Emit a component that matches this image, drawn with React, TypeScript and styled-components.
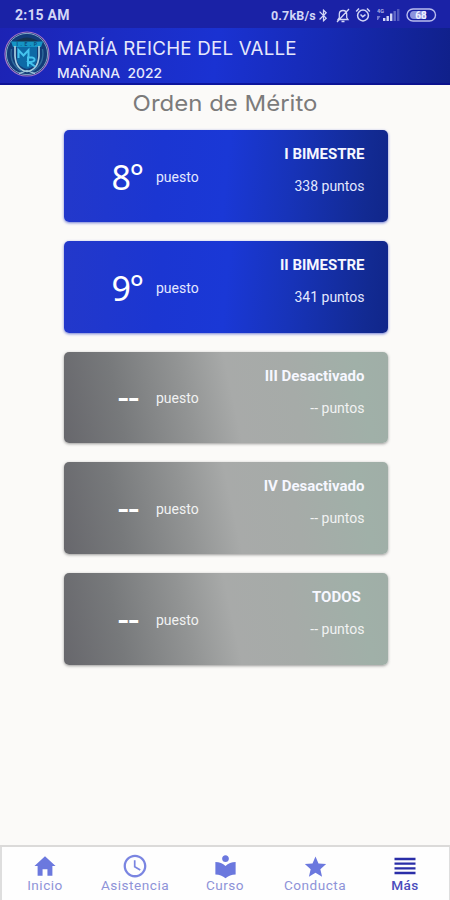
import React from "react";
import styled, { createGlobalStyle } from "styled-components";
import { IoMdHome, IoMdTime, IoMdStar } from "react-icons/io";
import { MdLocalLibrary, MdReorder, MdBluetooth } from "react-icons/md";

const GlobalStyle = createGlobalStyle`
  * { box-sizing: border-box; }
  body { margin: 0; background: #fbfaf8; font-family: Roboto, "Noto Sans", sans-serif; }
`;

const Screen = styled.div`
  width: 450px;
  height: 900px;
  display: flex;
  flex-direction: column;
  background: #fbfaf8;
  overflow: hidden;
`;

const StatusBar = styled.div`
  height: 28px;
  flex: none;
  display: flex;
  align-items: center;
  justify-content: space-between;
  padding: 2px 13px 0 15px;
  background: #1a22a6;
  color: #d2d6f6;
`;

const Clock = styled.span`
  font-size: 14px;
  font-weight: 700;
  letter-spacing: 0.2px;
`;

const StatusItems = styled.div`
  display: flex;
  align-items: center;
  svg { display: block; }
`;

const Speed = styled.span`
  font-size: 12.5px;
  font-weight: 700;
  letter-spacing: 0.2px;
`;

const Indicators = styled.div`
  display: flex;
  align-items: center;
  gap: 5px;
`;

const Header = styled.header`
  height: 57px;
  flex: none;
  display: flex;
  align-items: flex-start;
  padding: 2px 0 0 4px;
  background: linear-gradient(96deg, #1c23b4 0%, #1b2cc4 25%, #1a32d2 48%, #162ab4 72%, #10208a 100%);
  border-bottom: 2px solid rgba(10, 14, 140, 0.75);
`;

const HeaderText = styled.div`
  display: flex;
  flex-direction: column;
  align-items: flex-start;
  padding: 7px 0 0 7px;
  font-family: Inter, sans-serif;
  color: #e6e8fb;
  white-space: pre;
`;

const School = styled.h1`
  margin: 0;
  font-size: 18px;
  line-height: 24px;
  font-weight: 400;
  letter-spacing: 0.2px;
  transform: scaleX(1.04);
  transform-origin: left;
`;

const Shift = styled.span`
  margin-top: 2px;
  font-size: 13px;
  line-height: 20px;
  font-weight: 500;
  transform: scaleX(1.065);
  transform-origin: left;
`;

const Title = styled.h2`
  height: 45px;
  flex: none;
  margin: 0;
  padding-top: 4px;
  text-align: center;
  font-family: Inter, sans-serif;
  font-weight: 400;
  font-size: 22px;
  line-height: 28px;
  color: #7b7b7b;
  transform: scaleX(1.09);
`;

const CardList = styled.main`
  flex: 1;
  display: flex;
  flex-direction: column;
  gap: 19px;
  padding: 0 62.5px 0 63.5px;
`;

const Card = styled.section<{ $active: boolean }>`
  height: 91.8px;
  display: flex;
  justify-content: space-between;
  padding-right: 23px;
  border-radius: 5px;
  color: ${(p) => (p.$active ? "#e3e8ff" : "#f1f2f2")};
  background: ${(p) =>
    p.$active
      ? "linear-gradient(95deg, #2338ca 0%, #1b36d2 30%, #1a38d6 50%, #1733b8 70%, #122a92 93%, #10268a 100%)"
      : "linear-gradient(78deg, #67676c 0%, #77797b 18%, #929494 38%, #a8aaa9 52%, #a6aba8 70%, #a0b0a8 90%, #a0aea7 100%)"};
  box-shadow: 0 1px 3px ${(p) => (p.$active ? "rgba(20, 40, 190, 0.6)" : "rgba(60, 60, 60, 0.5)")};
`;

const Rank = styled.div`
  display: flex;
  align-items: center;
  padding-top: 2px;
`;

const Place = styled.span<{ $active: boolean }>`
  width: 92.5px;
  padding-left: ${(p) => (p.$active ? "48px" : "54px")};
  font-family: ${(p) => (p.$active ? '"Noto Sans"' : "Roboto")}, sans-serif;
  font-size: 34px;
  font-weight: ${(p) => (p.$active ? 400 : 500)};
  line-height: 40px;
  letter-spacing: ${(p) => (p.$active ? "-1.5px" : "-1px")};
  color: #fff;
`;

const PlaceLabel = styled.span`
  font-size: 14px;
`;

const Result = styled.div`
  display: flex;
  flex-direction: column;
  align-items: flex-end;
  padding-top: 14px;
  gap: 12px;
  line-height: 20px;
`;

const Term = styled.strong`
  font-size: 15px;
  font-weight: 700;
  color: #f6f7ff;
  white-space: pre;
`;

const Points = styled.span`
  font-size: 14px;
`;

const TabBar = styled.nav`
  height: 55px;
  flex: none;
  display: grid;
  grid-template-columns: repeat(5, 90px);
  background: #fefefe;
  box-shadow: inset 0 2px #dbdad9, inset 2px 0 #dedede, inset -1px 0 #dedede;
`;

const Tab = styled.button`
  display: flex;
  flex-direction: column;
  align-items: center;
  padding: 7px 0 0;
  border: 0;
  background: none;
  font-family: Roboto, sans-serif;
`;

const IconBox = styled.span<{ $current?: boolean }>`
  height: 28px;
  display: flex;
  align-items: center;
  color: ${(p) => (p.$current ? "#2a2ea8" : "#6b78de")};
`;

const TabLabel = styled.span<{ $current?: boolean }>`
  font-size: 13.6px;
  line-height: 16px;
  letter-spacing: 0.5px;
  margin-top: -3px;
  color: ${(p) => (p.$current ? "#4a4cbc" : "#8e93d8")};
  font-weight: ${(p) => (p.$current ? 500 : 400)};
`;

const Crest = () => (
  <svg width="46" height="48" viewBox="0 0 46 48">
    <circle cx="23" cy="24" r="22" fill="#122c78" stroke="#a578c4" strokeWidth="1.2" />
    <circle cx="23" cy="24" r="20.6" fill="#123c78" stroke="#8fb4cc" strokeWidth="0.9" />
    <path d="M8 14 Q23 1 38 14 Z" fill="#16334f" />
    <path d="M7 11.500 H39 L37 17 H9 Z" fill="#1594c4" />
    <path d="M13 17 H33 V31 Q31 37 23 39 Q15 37 13 31 Z" fill="#0d6aa6" />
    <path d="M11 16 V26 Q12 40 23 41.500 Q34 40 35 26 V16" fill="none" stroke="#a9cfe0" strokeWidth="1.7" />
    <path d="M7.500 19 Q5 34 18 41.500 M38.500 19 Q41 34 28 41.500" fill="none" stroke="#2f6b9c" strokeWidth="1.4" />
    <path d="M15 43.500 Q19 42.500 23 40.500 Q27 42.500 31 43.500" fill="none" stroke="#9cc5da" strokeWidth="1.3" />
    <text x="24" y="16.200" textAnchor="middle" fontFamily="Roboto" fontSize="5" fontWeight="700" letterSpacing="2.500" fill="#0b4d80">I.E.P</text>
    <path d="M14.500 28 V20 L19.500 25.500 L24.500 20 V28" fill="none" stroke="#45c4ee" strokeWidth="2" />
    <path d="M24 36.500 V27.500 H28 Q31 28 30.500 30 Q30 32 25 32 L31 36.500" fill="none" stroke="#45c4ee" strokeWidth="2" />
  </svg>
);

const MutedBell = () => (
  <svg width="14" height="15" viewBox="0 0 14 15" fill="none" stroke="currentColor" strokeWidth="1.3">
    <path d="M2 11.500 H12 L10.700 9.500 V6 Q10.500 2.500 7 2.500 Q3.500 2.500 3.300 6 V9.500 Z M5.500 13.500 H8.500 M1 14 L13 1" />
  </svg>
);

const Alarm = () => (
  <svg width="16" height="16" viewBox="0 0 16 16" fill="none" stroke="currentColor" strokeWidth="1.5">
    <circle cx="8" cy="8.500" r="5.400" />
    <path d="M1.200 4.500 L4 1.500 M14.800 4.500 L12 1.500 M5.500 7.500 L7.800 9.700 L10.500 7.700" />
  </svg>
);

const Signal = () => (
  <svg width="25" height="14" viewBox="0 0 25 14" fill="currentColor">
    <text x="1" y="5" fontFamily="Roboto" fontSize="5.500" fontWeight="700" opacity="0.8">4G</text>
    <path d="M1 8 L4.500 8 L2 12 L1 12 Z" opacity="0.5" />
    <rect x="7" y="10" width="2.400" height="3" />
    <rect x="10.500" y="8" width="2.400" height="5" />
    <rect x="14" y="5.500" width="2.400" height="7.500" />
    <rect x="17.500" y="3" width="2.400" height="10" opacity="0.4" />
    <rect x="21" y="1" width="2.400" height="12" opacity="0.3" />
  </svg>
);

const Battery = () => (
  <svg width="31" height="14" viewBox="0 0 31 14">
    <rect x="1" y="1" width="28.500" height="12" rx="6" fill="none" stroke="#b9bdee" strokeWidth="1.400" />
    <path d="M8 3 H20 V11 H8 Q4 11 4 7 Q4 3 8 3 Z" fill="#8c93dc" />
    <text x="15" y="10.600" textAnchor="middle" fontFamily="Roboto" fontSize="10" fontWeight="700" fill="#eef0ff">68</text>
  </svg>
);

const results = [
  { place: "8°", term: "I BIMESTRE", points: "338 puntos", active: true },
  { place: "9°", term: "II BIMESTRE", points: "341 puntos", active: true },
  { place: "--", term: "III Desactivado", points: "-- puntos", active: false },
  { place: "--", term: "IV Desactivado", points: "-- puntos", active: false },
  { place: "--", term: "TODOS ", points: "-- puntos", active: false },
];

const tabs = [
  { label: "Inicio", icon: <IoMdHome size={26} /> },
  { label: "Asistencia", icon: <IoMdTime size={28} /> },
  { label: "Curso", icon: <MdLocalLibrary size={27} /> },
  { label: "Conducta", icon: <IoMdStar size={27} /> },
  { label: "Más", icon: <MdReorder size={28} />, current: true },
];

export default function App() {
  return (
    <Screen>
      <GlobalStyle />
      <StatusBar>
        <Clock>2:15 AM</Clock>
        <StatusItems>
          <Speed>0.7kB/s</Speed>
          <Indicators>
            <MdBluetooth size={15} />
            <MutedBell />
            <Alarm />
            <Signal />
            <Battery />
          </Indicators>
        </StatusItems>
      </StatusBar>
      <Header>
        <Crest />
        <HeaderText>
          <School>MARÍA REICHE DEL VALLE</School>
          <Shift>{"MAÑANA  2022"}</Shift>
        </HeaderText>
      </Header>
      <Title>Orden de Mérito</Title>
      <CardList>
        {results.map((r) => (
          <Card key={r.term} $active={r.active}>
            <Rank>
              <Place $active={r.active}>{r.place}</Place>
              <PlaceLabel>puesto</PlaceLabel>
            </Rank>
            <Result>
              <Term>{r.term}</Term>
              <Points>{r.points}</Points>
            </Result>
          </Card>
        ))}
      </CardList>
      <TabBar>
        {tabs.map((t) => (
          <Tab key={t.label}>
            <IconBox $current={t.current}>{t.icon}</IconBox>
            <TabLabel $current={t.current}>{t.label}</TabLabel>
          </Tab>
        ))}
      </TabBar>
    </Screen>
  );
}
